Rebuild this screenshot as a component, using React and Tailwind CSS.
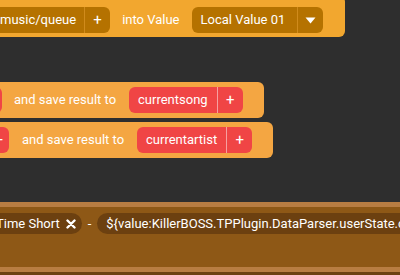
import React from "react";

const Plus = () => <span className="text-[15px] leading-none text-white">+</span>;

export default function App() {
  return (
    <div
      className="w-[400px] h-[275px] overflow-hidden bg-[#2e2e2e] text-[13px] text-white"
      style={{ fontFamily: "Roboto, 'Liberation Sans', sans-serif" }}
    >
      {/* Get value row */}
      <div className="flex">
        <div className="-ml-[10px] -mt-[4px] flex items-center rounded-md bg-[#f2a72f] pt-[11px] pb-[4px] pr-[22px]">
          <div className="flex h-[26px] items-center rounded-md bg-[#b57200]">
            <span className="pl-[10px] pr-[8px]">music/queue</span>
            <div className="h-full w-px bg-[#d08b1c]" />
            <div className="flex w-[25px] items-center justify-center">
              <Plus />
            </div>
          </div>
          <span className="ml-[12px] mr-[12px]">into Value</span>
          <div className="flex h-[26px] items-center rounded-md bg-[#b57200]">
            <span className="pl-[9px] pr-[12px]">Local Value 01</span>
            <div className="h-full w-px bg-[#d08b1c]" />
            <div className="flex w-[25px] items-center justify-center">
              <svg width="11" height="7" viewBox="0 0 11 7">
                <path d="M0.5 0.5h10L5.5 6.5z" fill="white" />
              </svg>
            </div>
          </div>
        </div>
      </div>

      {/* Save result rows */}
      <div className="mt-[45px] flex">
        <div className="-ml-[40px] flex h-[36px] items-center rounded-md bg-[#f4a642] pr-[21px]">
          <div className="h-[26px] w-[42px] rounded-md bg-[#f04545]" />
          <span className="ml-[12px] mr-[13px]">and save result to</span>
          <div className="flex h-[26px] items-center rounded-md bg-[#f04545]">
            <span className="pl-[9px] pr-[9px]">currentsong</span>
            <div className="h-full w-px bg-[#f6a0a0]" />
            <div className="flex w-[25px] items-center justify-center">
              <Plus />
            </div>
          </div>
        </div>
      </div>
      <div className="mt-[4px] flex">
        <div className="-ml-[33px] flex h-[36px] items-center rounded-md bg-[#f4a642] pr-[21px]">
          <div className="flex h-[26px] w-[42px] items-center justify-end rounded-md bg-[#f04545] pr-[6px]">
            <Plus />
          </div>
          <span className="ml-[13px] mr-[13px]">and save result to</span>
          <div className="flex h-[26px] items-center rounded-md bg-[#f04545]">
            <span className="pl-[9px] pr-[9px]">currentartist</span>
            <div className="h-full w-px bg-[#f6a0a0]" />
            <div className="flex w-[25px] items-center justify-center">
              <Plus />
            </div>
          </div>
        </div>
      </div>

      {/* Text block */}
      <div className="mt-[44px] border-t-[5px] border-b-[5px] border-[#b87d42] bg-[#8e5816]">
        <div className="flex h-[60px] items-start pt-[6px]">
          <div className="-ml-[14px] flex h-[21px] items-center whitespace-nowrap rounded-full bg-[#6c4010] pl-[10px] pr-[6px]">
            <span>Time Short</span>
            <svg className="ml-[6px]" width="10" height="10" viewBox="0 0 10 10">
              <path d="M1.5 1.5l7 7M8.5 1.5l-7 7" stroke="white" strokeWidth="2.4" strokeLinecap="round" />
            </svg>
          </div>
          <span className="mx-[6px] leading-[21px]">-</span>
          <div className="flex h-[21px] items-center whitespace-nowrap rounded-full bg-[#6c4010] pl-[9px] pr-[10px]">
            <span>{"${value:KillerBOSS.TPPlugin.DataParser.userState.currentTrack}"}</span>
          </div>
        </div>
      </div>
      <div className="h-[10px] bg-[#6c4010]" />
    </div>
  );
}
